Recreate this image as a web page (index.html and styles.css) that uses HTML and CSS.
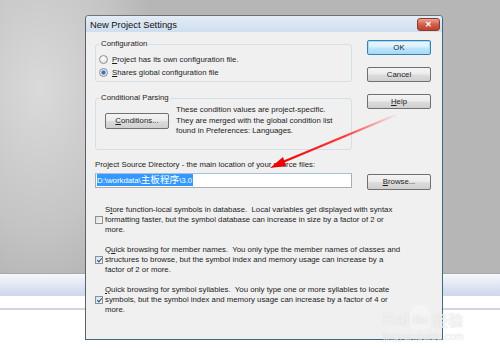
FILE: index.html
```html
<!DOCTYPE html>
<html lang="en">
<head>
  <meta charset="UTF-8" />
  <title>New Project Settings</title>
  <link rel="stylesheet" href="styles.css">
</head>
<body>
  <div class="desk">
    <div class="desk-top"></div>
    <div class="band"></div>
    <div class="desk-white"></div>
    <div class="desk-line"></div>
    <div class="desk-rest"></div>
  </div>

  <div class="dialog">
    <div class="titlebar">
      <span class="title">New Project Settings</span>
      <span class="close">&#x2715;</span>
    </div>
    <div class="client">
      <div class="top">
        <div class="left-col">
          <fieldset class="group config">
            <legend>Configuration</legend>
            <label class="radio-row"><span class="radio"></span><span><u>P</u>roject has its own configuration file.</span></label>
            <label class="radio-row"><span class="radio on"></span><span><u>S</u>hares global configuration file</span></label>
          </fieldset>
          <fieldset class="group cond">
            <legend>Conditional Parsing</legend>
            <div class="cond-row">
              <button class="btn cond-btn"><u>C</u>onditions...</button>
              <p class="cond-text">These condition values are project-specific.<br>They are merged with the global condition list<br>found in Preferences: Languages.</p>
            </div>
          </fieldset>
        </div>
        <div class="right-col">
          <button class="btn default">OK</button>
          <button class="btn">Cancel</button>
          <button class="btn"><u>H</u>elp</button>
        </div>
      </div>

      <div class="source-row">
        <div class="left-col">
          <div class="source-label">Project Source Directory - the main location of your source files:</div>
          <div class="input"><span class="sel">D:\workdata\<span class="cjk">主板程序</span>\3.0</span></div>
        </div>
        <button class="btn browse"><u>B</u>rowse...</button>
      </div>

      <div class="options">
        <div class="option">
          <span class="check"></span>
          <p>S<u>t</u>ore function-local symbols in database.&nbsp; Local variables get displayed with syntax<br>formatting faster, but the symbol database can increase in size by a factor of 2 or<br>more.</p>
        </div>
        <div class="option">
          <span class="check on"></span>
          <p>Q<u>u</u>ick browsing for member names.&nbsp; You only type the member names of classes and<br>structures to browse, but the symbol index and memory usage can increase by a<br>factor of 2 or more.</p>
        </div>
        <div class="option">
          <span class="check on"></span>
          <p><u>Q</u>uick browsing for symbol syllables.&nbsp; You only type one or more syllables to locate<br>symbols, but the symbol index and memory usage can increase by a factor of 4 or<br>more.</p>
        </div>
      </div>
    </div>
  </div>

  <svg class="arrow" width="500" height="348" viewBox="0 0 500 348">
    <defs>
      <linearGradient id="fade" x1="398" y1="114" x2="280" y2="164" gradientUnits="userSpaceOnUse">
        <stop offset="0" stop-color="#ff2020" stop-opacity="0"/>
        <stop offset="0.45" stop-color="#ff1010" stop-opacity="0.8"/>
        <stop offset="1" stop-color="#f00000"/>
      </linearGradient>
    </defs>
    <line x1="398" y1="114" x2="278" y2="164" stroke="url(#fade)" stroke-width="2.2"/>
    <polygon points="270,168 283,157 286,166" fill="#f00000"/>
  </svg>

  <div class="watermark">
    <div class="wm-logo">Bai<span class="paw">du</span><span class="wm-cn">经验</span></div>
    <div class="wm-url">jingyan.baidu.com</div>
  </div>
</body>
</html>
```

FILE: styles.css
```css
body {
  margin: 0;
  width: 500px;
  height: 348px;
  overflow: hidden;
  position: relative;
  font-family: "Liberation Sans", Arial, sans-serif;
  font-size: 7.8px;
  color: #1c1c1c;
}
.desk {
  display: flex;
  flex-direction: column;
  height: 348px;
}
.desk-top {
  height: 273px;
  background: radial-gradient(ellipse 120px 200px at 40px 90px, #dadada, #c4c4c4 70%, #b6b6b6);
}
.band {
  height: 22px;
  border-top: 1px solid #a9a9a9;
  background: linear-gradient(to bottom, #f6f7fb, #e9ecf6 35%, #d9dff1 70%, #d0d7ed);
}
.desk-white {
  height: 12px;
  background: #ffffff;
}
.desk-line {
  height: 2px;
  background: #cfd3e2;
}
.desk-rest {
  flex: 1;
  background: #ffffff;
}

.dialog {
  position: absolute;
  left: 85px;
  top: 15px;
  width: 356px;
  height: 323px;
  border: 1px solid #3e6a80;
  border-left-color: #5b6168;
  border-top-color: #6d7378;
  border-radius: 4px 4px 0 0;
  background: #f0f0f0;
  display: flex;
  flex-direction: column;
}
.titlebar {
  height: 16px;
  display: flex;
  align-items: center;
  justify-content: space-between;
  padding: 0 2px 0 4px;
  background: linear-gradient(to bottom, #e3ecf7, #cfdeef);
  border-radius: 3px 3px 0 0;
}
.title {
  font-size: 9.4px;
  color: #111;
}
.close {
  width: 23px;
  height: 13px;
  display: flex;
  align-items: center;
  justify-content: center;
  color: #fff;
  font-size: 8px;
  font-weight: bold;
  background: linear-gradient(to bottom, #e8a493, #d0614a 50%, #bf3f28);
  border: 1px solid #8e3a2c;
  border-radius: 3px;
  box-sizing: border-box;
}

.client {
  flex: 1;
  padding: 7px 11px 0 9px;
}
.top {
  display: flex;
  gap: 15px;
}
.left-col {
  width: 257px;
}
.right-col {
  display: flex;
  flex-direction: column;
  gap: 12px;
  padding-top: 1px;
}

.group {
  margin: 0;
  border: 1px solid #d6dfe6;
  border-radius: 3px;
}
.group legend {
  padding: 0 1px;
  line-height: 10px;
}
.config {
  padding: 4px 0 2px 3px;
}
.config legend {
  margin-left: 1px;
}
.radio-row {
  display: flex;
  align-items: center;
  gap: 4px;
  height: 13px;
}
.radio {
  width: 9px;
  height: 9px;
  border-radius: 50%;
  border: 1px solid #8e8f8f;
  background: radial-gradient(circle at 40% 35%, #ffffff, #d8d8d8);
  box-sizing: border-box;
}
.radio.on {
  background: radial-gradient(circle, #2a6bb8 0, #3c84d4 1.8px, #e8eef5 2.6px, #d4d9de);
}
.cond {
  margin-top: 11px;
  padding: 2px 0 12px 9px;
}
.cond legend {
  margin-left: -5px;
}
.cond-row {
  display: flex;
  align-items: center;
  gap: 7px;
}
.cond-text {
  margin: 0;
  line-height: 10.5px;
  white-space: nowrap;
}

.btn {
  width: 64px;
  height: 15px;
  padding: 0;
  font-family: inherit;
  font-size: 7.8px;
  color: #1c1c1c;
  border: 1px solid #707070;
  border-radius: 2px;
  background: linear-gradient(to bottom, #f4f4f4, #ebebeb 48%, #dddddd 52%, #cfcfcf);
}
.cond-btn {
  height: 16px;
}
.btn.default {
  border-color: #3c7fb1;
  box-shadow: inset 0 0 0 1px #a6dcf3;
  background: linear-gradient(to bottom, #eaf6fd, #d9f0fc 48%, #bee6fd 52%, #a7d9f5);
}

.source-row {
  display: flex;
  align-items: flex-end;
  gap: 15px;
  margin-top: 10px;
}
.source-label {
  line-height: 10px;
  white-space: nowrap;
}
.input {
  margin-top: 3px;
  height: 15px;
  border: 1px solid #abadb3;
  border-top-color: #a3c2dc;
  background: #ffffff;
  box-sizing: border-box;
  display: flex;
  align-items: center;
  padding-left: 1px;
}
.sel {
  background: #3399ff;
  color: #ffffff;
  line-height: 11px;
  padding-right: 1px;
}
.cjk {
  font-family: "Noto Sans CJK SC", sans-serif;
  font-size: 9.6px;
  line-height: 11px;
}
.browse {
  height: 16px;
  margin-bottom: -2px;
}

.options {
  margin-top: 17px;
  display: flex;
  flex-direction: column;
  gap: 10px;
}
.option {
  display: flex;
  align-items: center;
  gap: 2px;
}
.option p {
  margin: 0;
  line-height: 10px;
  white-space: nowrap;
}
.check {
  width: 8px;
  height: 8px;
  flex: none;
  border: 1px solid #8e8f8f;
  background: linear-gradient(135deg, #dedede, #f8f8f8);
  box-sizing: border-box;
  position: relative;
}
.check.on {
  background: linear-gradient(135deg, #cfe3f4, #f2f7fc);
}
.check.on::after {
  content: "";
  position: absolute;
  left: 2px;
  top: 0;
  width: 2px;
  height: 4px;
  border: solid #2a4d8f;
  border-width: 0 1.5px 1.5px 0;
  transform: rotate(40deg);
}

.arrow {
  position: absolute;
  left: 0;
  top: 0;
  pointer-events: none;
}

.watermark {
  position: absolute;
  left: 383px;
  top: 305px;
  color: rgba(255, 255, 255, 0.7);
  text-shadow: 0 0 1px rgba(150, 150, 150, 0.4);
}
.wm-logo {
  font-size: 17px;
  font-weight: bold;
  line-height: 18px;
  display: flex;
  align-items: flex-end;
}
.paw {
  font-size: 13px;
  margin: 0 1px;
  padding: 6px 2px 0;
  border-radius: 8px 8px 4px 4px;
  background: rgba(255, 255, 255, 0.3);
}
.wm-cn {
  font-family: "Noto Sans CJK SC", sans-serif;
  font-size: 15px;
  margin-left: 2px;
}
.wm-url {
  font-size: 10px;
  line-height: 12px;
  margin-top: 2px;
  color: rgba(255, 255, 255, 0.65);
}
```
